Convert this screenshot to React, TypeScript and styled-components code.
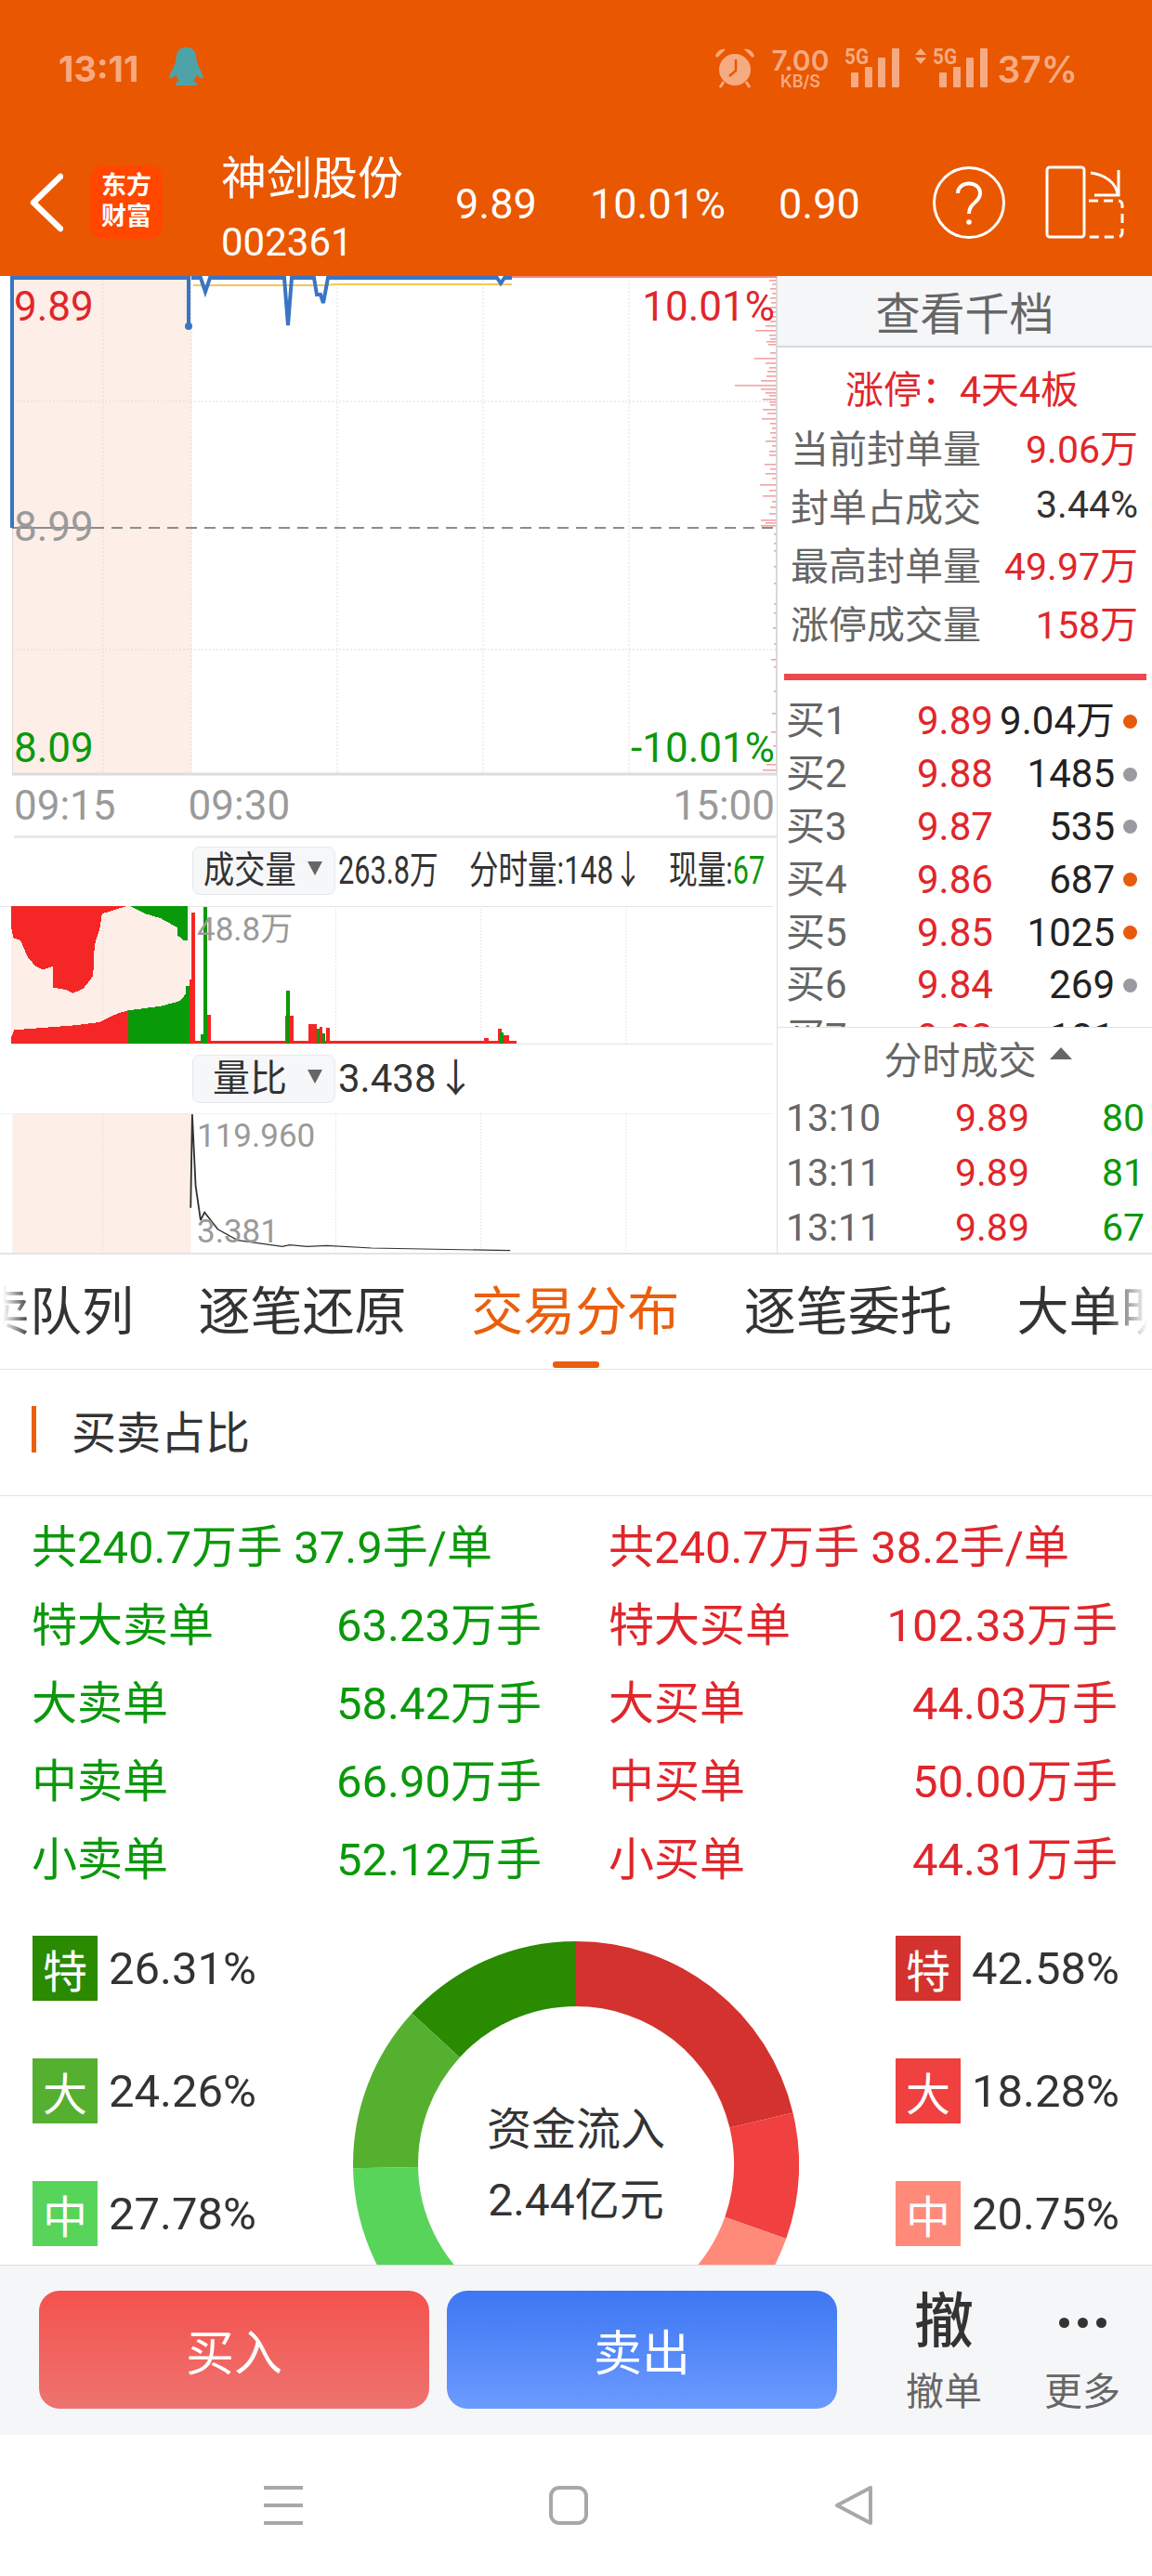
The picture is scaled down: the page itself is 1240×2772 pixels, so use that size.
import styled, { createGlobalStyle } from 'styled-components';

const RED = '#e0262b';
const GREEN = '#0b980b';
const ORANGE = '#e95700';
const STATUS = '#f6aa82';

const GlobalStyle = createGlobalStyle`
  html, body {
    margin: 0;
    padding: 0;
    background: #fff;
  }
  * {
    box-sizing: border-box;
  }
`;

const Page = styled.div`
  width: 1240px;
  height: 2772px;
  display: flex;
  flex-direction: column;
  overflow: hidden;
  background: #fff;
  color: #222;
  font-family: Roboto, 'Noto Sans CJK SC', sans-serif;
`;

const Top = styled.div`
  height: 297px;
  flex: none;
  background: ${ORANGE};
  display: flex;
  flex-direction: column;
`;

const StatusBar = styled.div`
  height: 178px;
  flex: none;
  padding: 51px 80px 0 63px;
  display: flex;
  align-items: flex-start;
  color: ${STATUS};
  font-family: Inter, Roboto, sans-serif;
`;

const Clock = styled.span`
  font-size: 38px;
  font-weight: 700;
  line-height: 46px;
  margin-right: 33px;
`;

const StatusRight = styled.div`
  margin-left: auto;
  display: flex;
  align-items: flex-start;
`;

const Speed = styled.div`
  width: 66px;
  margin: 0 14px 0 16px;
  display: flex;
  flex-direction: column;
  align-items: center;
  font-weight: 600;
  span:first-child {
    font-size: 30px;
    line-height: 28px;
  }
  span:last-child {
    font-size: 18px;
    line-height: 17px;
  }
`;

const SignalIcon = styled.svg<{ $gap: number }>`
  margin-left: ${p => p.$gap}px;
  flex: none;
`;

const Battery = styled.span`
  font-size: 39px;
  font-weight: 600;
  line-height: 48px;
  margin-left: 10px;
`;

const Header = styled.div`
  flex: 1;
  display: flex;
  align-items: flex-start;
  padding-left: 32px;
  color: #fff;
`;

const Logo = styled.div`
  width: 78px;
  height: 79px;
  margin-left: 29px;
  border-radius: 14px;
  background: #ff4700;
  color: #fff;
  font-size: 27px;
  font-weight: 700;
  line-height: 33px;
  text-align: center;
  padding-top: 6px;
`;

const Name = styled.div`
  width: 252px;
  margin-left: 63px;
  margin-top: -18px;
  display: flex;
  flex-direction: column;
  span:first-child {
    font-size: 49px;
    line-height: 66px;
  }
  span:last-child {
    font-size: 42px;
    line-height: 48px;
    margin-top: 11px;
  }
`;

const Quote = styled.span<{ $w: number }>`
  width: ${p => p.$w}px;
  font-size: 45px;
  line-height: 84px;
`;

const Quotes = styled.section`
  height: 1053px;
  flex: none;
  display: flex;
`;

const Charts = styled.div`
  width: 836px;
  flex: none;
  display: flex;
  flex-direction: column;
  border-bottom: 2px solid #e4e4e4;
`;

const ChartBox = styled.div<{ $h: number }>`
  position: relative;
  height: ${p => p.$h}px;
  flex: none;
  svg {
    display: block;
  }
`;

const ChartLabel = styled.span<{ $color: string; $size?: number; $left?: number; $right?: number; $cy: number }>`
  position: absolute;
  ${p => (p.$left !== undefined ? `left: ${p.$left}px;` : '')}
  ${p => (p.$right !== undefined ? `right: ${p.$right}px;` : '')}
  top: ${p => p.$cy - 30}px;
  font-size: ${p => p.$size ?? 44}px;
  line-height: 60px;
  color: ${p => p.$color};
`;

const Axis = styled.div`
  height: 67px;
  flex: none;
  margin-left: 15px;
  padding-right: 2px;
  border-bottom: 3px solid #e8e8e8;
  display: flex;
  align-items: center;
  color: #9a9a9a;
  font-size: 44px;
  line-height: 60px;
  span:nth-child(2) {
    margin-left: 78px;
  }
  span:last-child {
    margin-left: auto;
  }
`;

const IndicatorRow = styled.div<{ $h: number; $pad: number }>`
  height: ${p => p.$h}px;
  flex: none;
  padding: ${p => p.$pad}px 0 0 207px;
  display: flex;
  align-items: flex-start;
  line-height: 52px;
  color: #333;
`;

const Select = styled.div<{ $pad: number }>`
  width: 154px;
  height: 52px;
  padding-left: ${p => p.$pad}px;
  margin-right: 3px;
  border: 1px solid #e6e8ec;
  border-radius: 8px;
  background: #f6f7f9;
  display: flex;
  align-items: center;
  font-size: 40px;
  color: #333;
  flex: none;
  i {
    width: 0;
    height: 0;
    margin-left: auto;
    margin-right: 13px;
    margin-top: -6px;
    border-left: 8px solid transparent;
    border-right: 8px solid transparent;
    border-top: 15px solid #666;
  }
`;

const Squeezed = styled.span<{ $w: number; $scale: number; $size: number }>`
  display: inline-block;
  flex: none;
  width: ${p => p.$w}px;
  font-size: ${p => p.$size}px;
  white-space: nowrap;
  transform: scaleX(${p => p.$scale});
  transform-origin: left center;
  em {
    font-style: normal;
    color: ${GREEN};
  }
`;

const RatioValue = styled.span`
  font-size: 42px;
  white-space: nowrap;
`;

const Side = styled.div`
  flex: 1;
  min-width: 0;
  height: 1053px;
  overflow: hidden;
  border-left: 1px solid #dedede;
  border-bottom: 2px solid #e4e4e4;
  display: flex;
  flex-direction: column;
`;

const SideTitle = styled.div`
  height: 77px;
  flex: none;
  background: #f5f6f8;
  border-bottom: 2px solid #d9dadc;
  display: flex;
  align-items: center;
  justify-content: center;
  font-size: 48px;
  color: #666;
  padding-bottom: 2px;
`;

const LimitTitle = styled.div`
  height: 74px;
  flex: none;
  padding-top: 10px;
  padding-left: 73px;
  display: flex;
  align-items: center;
  font-size: 41px;
  color: ${RED};
`;

const LimitRows = styled.div`
  padding: 0 15px 0 14px;
  display: flex;
  flex-direction: column;
`;

const LimitRow = styled.div`
  height: 63px;
  display: flex;
  align-items: center;
  justify-content: space-between;
  font-size: 41px;
  color: #666;
`;

const LimitValue = styled.span<{ $red?: boolean }>`
  font-size: 41px;
  color: ${p => (p.$red ? RED : '#333')};
`;

const RedRule = styled.div`
  height: 7px;
  flex: none;
  margin: 25px 6px 16px 7px;
  background: #e84a4f;
`;

const Book = styled.div`
  height: 357px;
  flex: none;
  overflow: hidden;
  padding-left: 9px;
`;

const BookRow = styled.div`
  height: 56.8px;
  display: flex;
  align-items: center;
  font-size: 42px;
  line-height: 56px;
`;

const BookLabel = styled.span`
  width: 141px;
  flex: none;
  color: #666;
`;

const BookPrice = styled.span`
  width: 84px;
  flex: none;
  color: ${RED};
`;

const BookQty = styled.span`
  width: 129px;
  flex: none;
  text-align: right;
  color: #222;
  white-space: nowrap;
`;

const Dot = styled.i<{ $on: boolean }>`
  width: 15px;
  height: 15px;
  margin-left: 9px;
  flex: none;
  border-radius: 50%;
  background: ${p => (p.$on ? '#e85a0c' : '#9a9aa2')};
`;

const TradesTitle = styled.div`
  height: 68px;
  flex: none;
  border-top: 1px solid #e2e2e2;
  display: flex;
  align-items: center;
  justify-content: center;
  gap: 14px;
  font-size: 41px;
  color: #666;
  padding: 0 0 4px 28px;
  i {
    width: 0;
    height: 0;
    margin-bottom: 8px;
    border-left: 12px solid transparent;
    border-right: 12px solid transparent;
    border-bottom: 13px solid #666;
  }
`;

const TradeRow = styled.div`
  height: 59px;
  flex: none;
  padding: 0 8px 0 9px;
  display: flex;
  align-items: center;
  font-size: 41px;
  span:nth-child(1) {
    width: 182px;
    color: #666;
  }
  span:nth-child(2) {
    width: 82px;
    color: ${RED};
  }
  span:nth-child(3) {
    margin-left: auto;
    color: ${GREEN};
  }
`;

const Tabs = styled.nav`
  position: relative;
  height: 124px;
  flex: none;
  overflow: hidden;
  border-bottom: 1px solid #e6e6e6;
  display: flex;
  align-items: center;
`;

const TabList = styled.div`
  margin-left: -80px;
  display: flex;
  gap: 69.6px;
`;

const Tab = styled.span<{ $active?: boolean }>`
  position: relative;
  flex: none;
  width: 224px;
  font-size: 56px;
  line-height: 80px;
  white-space: nowrap;
  color: ${p => (p.$active ? '#eb5e0c' : '#333')};
  ${p =>
    p.$active
      ? `&::after {
    content: '';
    position: absolute;
    left: 88px;
    bottom: -20px;
    width: 50px;
    height: 7px;
    border-radius: 3px;
    background: #eb5e0c;
  }`
      : ''}
`;

const Fade = styled.div<{ $side: 'left' | 'right' }>`
  position: absolute;
  top: 0;
  bottom: 0;
  ${p => p.$side}: 0;
  width: ${p => (p.$side === 'left' ? 32 : 50)}px;
  background: linear-gradient(to ${p => p.$side}, rgba(255, 255, 255, 0), #fff 90%);
`;

const Scroll = styled.main`
  flex: 1;
  min-height: 0;
  overflow: hidden;
`;

const SectionHead = styled.div`
  height: 136px;
  padding: 0 0 8px 34px;
  border-bottom: 1px solid #e2e2e2;
  display: flex;
  align-items: center;
  font-size: 48px;
  color: #333;
  &::before {
    content: '';
    width: 5px;
    height: 50px;
    margin-right: 38px;
    background: #eb5e0c;
  }
`;

const Stats = styled.div`
  padding: 8px 36px 0 34px;
  display: grid;
  grid-template-columns: 549px 548px;
  column-gap: 72px;
`;

const StatRow = styled.div<{ $color: string }>`
  height: 84px;
  display: flex;
  align-items: center;
  justify-content: space-between;
  font-size: 49px;
  color: ${p => p.$color};
  white-space: nowrap;
`;

const Split = styled.div`
  margin-top: 45px;
  padding: 0 35px;
  display: flex;
  justify-content: space-between;
`;

const Legend = styled.div`
  width: 241px;
  flex: none;
  display: flex;
  flex-direction: column;
  gap: 62px;
`;

const LegendRow = styled.div`
  height: 70px;
  display: flex;
  align-items: center;
  gap: 12px;
  font-size: 49px;
  color: #333;
  white-space: nowrap;
`;

const LegendBox = styled.span<{ $bg: string }>`
  width: 70px;
  height: 70px;
  flex: none;
  display: flex;
  align-items: center;
  justify-content: center;
  background: ${p => p.$bg};
  color: #fff;
  font-size: 48px;
`;

const Donut = styled.div`
  position: relative;
  width: 480px;
  height: 480px;
  margin-top: 6px;
  flex: none;
  svg {
    display: block;
  }
`;

const DonutText = styled.div`
  position: absolute;
  inset: 0;
  display: flex;
  flex-direction: column;
  align-items: center;
  justify-content: center;
  font-size: 48px;
  line-height: 76px;
  color: #333;
  padding-top: 2px;
`;

const ActionBar = styled.footer`
  height: 183px;
  flex: none;
  background: #f5f6f8;
  border-top: 1px solid #dcdcdc;
  padding: 27px 0 0 42px;
  display: flex;
  align-items: flex-start;
`;

const TradeButton = styled.button<{ $from: string; $to: string }>`
  width: 420px;
  height: 127px;
  margin-right: 19px;
  border: 0;
  border-radius: 22px;
  background: linear-gradient(${p => p.$from}, ${p => p.$to});
  color: #fff;
  font-family: inherit;
  font-size: 52px;
`;

const ActionItem = styled.div<{ $w: number; $ml: number }>`
  width: ${p => p.$w}px;
  margin-left: ${p => p.$ml}px;
  flex: none;
  display: flex;
  flex-direction: column;
  align-items: center;
  font-size: 41px;
  line-height: 56px;
  color: #666;
`;

const ActionGlyph = styled.div`
  height: 68px;
  display: flex;
  align-items: center;
  justify-content: center;
  font-size: 64px;
  font-weight: 500;
  color: #333;
  margin-bottom: 13px;
  gap: 9px;
`;

const MoreDot = styled.i`
  width: 11px;
  height: 11px;
  border-radius: 50%;
  background: #333;
`;

const NavBar = styled.div`
  height: 152px;
  flex: none;
  padding: 55px 0 0 284px;
  display: flex;
  align-items: flex-start;
  gap: 265px;
  background: #fff;
`;

const BOOK = [
  ['买1', '9.89', '9.04万', true],
  ['买2', '9.88', '1485', false],
  ['买3', '9.87', '535', false],
  ['买4', '9.86', '687', true],
  ['买5', '9.85', '1025', true],
  ['买6', '9.84', '269', false],
  ['买7', '9.83', '181', false],
] as const;

const STATS: [string, string, string, string][] = [
  ['特大卖单', '63.23万手', '特大买单', '102.33万手'],
  ['大卖单', '58.42万手', '大买单', '44.03万手'],
  ['中卖单', '66.90万手', '中买单', '50.00万手'],
  ['小卖单', '52.12万手', '小买单', '44.31万手'],
];

const polar = (r: number, deg: number) => {
  const a = ((deg - 90) * Math.PI) / 180;
  return [240 + r * Math.cos(a), 240 + r * Math.sin(a)];
};

const arc = (from: number, to: number) => {
  const [lo, hi] = from < to ? [from, to] : [to, from];
  const [x1, y1] = polar(240, lo);
  const [x2, y2] = polar(240, hi);
  const [x3, y3] = polar(170, hi);
  const [x4, y4] = polar(170, lo);
  return `M${x1} ${y1}A240 240 0 0 1 ${x2} ${y2}L${x3} ${y3}A170 170 0 0 0 ${x4} ${y4}Z`;
};

const RING: [number, number, string][] = [
  [0, 76.6, '#d3322f'],
  [76.6, 109.5, '#f04040'],
  [109.5, 146.9, '#ff8a7a'],
  [146.9, 180, '#ffb9a8'],
  [0, -47.4, '#2a8a00'],
  [-47.4, -91, '#55b030'],
  [-91, -141, '#58d45a'],
  [-141, -180, '#a0e49c'],
];

// order-book depth ticks down the right edge of the price chart: [y, width]
const DEPTH: [number, number][] = [
  [4, 7], [8, 4], [13, 6], [18, 4], [23, 6], [28, 5], [33, 6], [38, 4], [43, 6], [48, 6],
  [53, 11], [58, 22], [63, 7], [67, 6], [70, 10], [73, 8], [82, 6], [88, 23], [93, 11], [98, 7],
  [102, 9], [107, 10], [112, 16], [117, 44], [121, 16], [125, 11], [128, 7], [132, 14], [135, 7], [138, 6],
  [143, 14], [147, 9], [153, 15], [158, 6], [163, 4], [168, 6], [173, 4], [177, 11], [182, 4], [188, 7],
  [192, 7], [202, 12], [207, 6], [212, 11], [217, 4], [224, 17], [230, 7], [236, 14], [242, 4], [248, 6],
  [255, 7], [262, 16], [265, 11], [268, 16], [277, 2], [287, 2], [295, 2], [312, 2], [330, 2], [352, 2],
  [362, 2], [378, 3], [395, 2], [412, 5], [420, 2], [446, 2], [470, 4], [490, 5], [505, 3], [525, 10], [531, 14],
];

const MainChart = () => (
  <svg width={836} height={538} viewBox="0 0 836 538">
    <rect x={13} y={0} width={193} height={536} fill="#fdeee7" />
    {[111, 206, 363, 520, 677].map(x => (
      <line key={x} x1={x} x2={x} y1={0} y2={536} stroke="#dedede" strokeDasharray="2 2" />
    ))}
    {[135, 402].map(y => (
      <line key={y} x1={13} x2={835} y1={y} y2={y} stroke="#dedede" strokeDasharray="2 2" />
    ))}
    <line x1={13.5} x2={13.5} y1={0} y2={536} stroke="#dcdcdc" />
    <line x1={835.5} x2={835.5} y1={0} y2={536} stroke="#d4d4d4" />
    <line x1={13} x2={836} y1={536} y2={536} stroke="#dcdcdc" strokeWidth={3} />
    <line x1={100} x2={835} y1={271} y2={271} stroke="#8c8c8c" strokeWidth={2} strokeDasharray="12 8" />
    <line x1={13} x2={100} y1={271} y2={271} stroke="#8c8c8c" strokeWidth={2} />
    {DEPTH.map(([y, w]) => (
      <rect key={y} x={835 - w} y={y} width={w} height={1.6} fill="#f2a3a3" />
    ))}
    <rect x={551} y={0} width={285} height={2} fill="#f0887c" />
    <path d="M208 10H350L360 9H551" fill="none" stroke="#f3c75a" strokeWidth={2} />
    <path
      d="M13 271V2H203V53M206 2H216L221 17L226 2H306L310 53L314 2H338L341 20L345 20L348 29L353 2H535L539 8L543 2H551"
      fill="none"
      stroke="#3a75c4"
      strokeWidth={4}
    />
    <circle cx={203} cy={54} r={4} fill="#3a75c4" />
  </svg>
);

const RED_BARS = [
  [382, 237, 5], [387, 22, 7], [417, 352, 8], [575, 355, 17], [623, 380, 17], [645, 390, 5],
  [658, 393, 8], [978, 427, 9], [1005, 395, 7], [1016, 417, 12], [1028, 435, 14],
];
const GREEN_BARS = [
  [405, 415, 6], [411, 3, 8], [578, 274, 8], [640, 395, 6], [650, 412, 6], [1010, 408, 6],
];

const VolumeChart = () => (
  <svg width={836} height={149} viewBox="0 0 1568 447" preserveAspectRatio="none" shapeRendering="crispEdges">
    <rect x={22} y={0} width={363} height={447} fill="#fdeee7" />
    {[208, 678, 971, 1264].map(x => (
      <line key={x} x1={x} x2={x} y1={0} y2={447} stroke="#dedede" strokeWidth={2} strokeDasharray="4 6" />
    ))}
    <line x1={0} x2={1560} y1={0} y2={0} stroke="#e4e4e4" strokeWidth={3} />
    <line x1={22} x2={1560} y1={446} y2={446} stroke="#e4e4e4" strokeWidth={5} />
    <polygon
      fill="#f42626"
      points="22,0 256,0 206,25 201,75 191,125 188,225 169,265 147,282 134,270 107,263 107,195 87,205 72,195 56,165 41,110 27,103 22,65"
    />
    <polygon fill="#099a09" points="262,0 378,0 378,110 370,110 359,95 359,70 325,40 294,25" />
    <polygon fill="#f42626" points="22,445 22,425 29,400 150,385 200,375 237,347 258,337 258,445" />
    <polygon fill="#099a09" points="258,337 325,323 362,307 375,285 376,257 382,257 382,445 258,445" />
    <rect x={382} y={435} width={660} height={10} fill="#f42626" />
    {RED_BARS.map(([x, y, w]) => (
      <rect key={x} x={x} y={y} width={w} height={445 - y} fill="#f42626" />
    ))}
    {GREEN_BARS.map(([x, y, w]) => (
      <rect key={x} x={x} y={y} width={w} height={445 - y} fill="#099a09" />
    ))}
  </svg>
);

const RatioChart = () => (
  <svg width={836} height={151} viewBox="0 0 1568 453" preserveAspectRatio="none">
    <rect x={25} y={0} width={360} height={450} fill="#fdeee7" />
    {[208, 678, 971, 1264].map(x => (
      <line key={x} x1={x} x2={x} y1={0} y2={450} stroke="#dedede" strokeWidth={2} strokeDasharray="4 6" />
    ))}
    <line x1={0} x2={1560} y1={0} y2={0} stroke="#e4e4e4" strokeWidth={3} />
    <polyline
      fill="none"
      stroke="#333"
      strokeWidth={3.5}
      points="385,305 388,3 395,235 405,345 413,320 440,375 480,410 570,430 585,425 620,430 660,427 750,435 1030,443"
    />
  </svg>
);

const Alarm = () => (
  <svg width={44} height={44} viewBox="0 0 44 44" fill="none">
    <circle cx={22} cy={24} r={17} fill={STATUS} />
    <path d="M23 13V25L16 31" stroke={ORANGE} strokeWidth={2.5} />
    <path d="M1 9C3 4 7 1 12 2L3 11ZM43 9C41 4 37 1 32 2L41 11Z" fill={STATUS} />
    <path d="M10 37L6 43M34 37L38 43" stroke={STATUS} strokeWidth={3} />
  </svg>
);

const Signal = ({ arrows }: { arrows?: boolean }) => (
  <SignalIcon
    $gap={arrows ? 16 : 0}
    width={arrows ? 79 : 60}
    height={44}
    viewBox={arrows ? '0 0 79 44' : '0 0 60 44'}
  >
    {arrows && <path d="M0 8L6 1L12 8ZM0 11L6 18L12 11Z" fill={STATUS} />}
    <g transform={arrows ? 'translate(26 0)' : 'translate(7 0)'}>
      <rect x={0} y={27} width={8} height={16} rx={1} fill={STATUS} />
      <rect x={15} y={21} width={8} height={22} rx={1} fill={STATUS} />
      <rect x={29} y={11} width={8} height={32} rx={1} fill={STATUS} />
      <rect x={44} y={1} width={8} height={42} rx={1} fill={STATUS} />
      <text
        x={-7}
        y={18}
        fontSize={23}
        fontWeight={700}
        fill={STATUS}
        textLength={26}
        lengthAdjust="spacingAndGlyphs"
        fontFamily="Roboto, sans-serif"
      >
        5G
      </text>
    </g>
  </SignalIcon>
);

const Penguin = () => (
  <svg width={37} height={42} viewBox="0 0 37 42">
    <path
      d="M18.5 0C10 0 7.500 6 7.500 13C7 19 2 25 0.500 31C0 34 2 34 5 32L7.500 29C8 32 9 34 11 36C8 37 6 39 7 41H30C31 39 29 37 26 36C28 34 29 32 29.500 29L32 32C35 34 37 34 36.500 31C35 25 30 19 29.500 13C29.500 6 27 0 18.500 0Z"
      fill="#4fa3a8"
    />
  </svg>
);

const Back = () => (
  <svg
    width={36}
    height={64}
    viewBox="0 0 36 64"
    fill="none"
    stroke="#fff"
    strokeWidth={6.5}
    strokeLinecap="round"
    strokeLinejoin="round"
    style={{ marginTop: 8 }}
  >
    <path d="M33 4L4 32L33 60" />
  </svg>
);

const Help = () => (
  <svg width={80} height={80} viewBox="0 0 80 80" fill="none" stroke="#fff">
    <circle cx={40} cy={40} r={37.5} strokeWidth={3} />
    <path d="M28 30C28 16 52 16 52 30C52 40 40 40 40 52" strokeWidth={4} />
    <circle cx={40} cy={61} r={2.8} fill="#fff" stroke="none" />
  </svg>
);

const Flip = () => (
  <svg width={86} height={80} viewBox="0 0 86 80" fill="none" stroke="#fff" strokeWidth={3} style={{ marginLeft: 42 }}>
    <rect x={2} y={2} width={40} height={75} rx={3} />
    <path d="M49 8C64 10 76 18 78 31M79 5V32H53" />
    <path d="M47 38H78Q83 38 83 43V72Q83 77 78 77H47" strokeDasharray="10 6" />
  </svg>
);

const Menu = () => (
  <svg width={42} height={42} viewBox="0 0 42 42" fill="#a8a8a8">
    <rect y={0} width={42} height={4} />
    <rect y={19} width={42} height={4} />
    <rect y={38} width={42} height={4} />
  </svg>
);

const Home = () => (
  <svg width={42} height={42} viewBox="0 0 42 42" fill="none" stroke="#a8a8a8" strokeWidth={4}>
    <rect x={2} y={2} width={38} height={38} rx={9} />
  </svg>
);

const Return = () => (
  <svg width={42} height={42} viewBox="0 0 42 42" fill="none" stroke="#a8a8a8" strokeWidth={4} strokeLinejoin="round">
    <path d="M39 2V40L3 21Z" />
  </svg>
);

const App = () => (
  <Page>
    <GlobalStyle />
    <Top>
      <StatusBar>
        <Clock>13:11</Clock>
        <Penguin />
        <StatusRight>
          <Alarm />
          <Speed>
            <span>7.00</span>
            <span>KB/S</span>
          </Speed>
          <Signal />
          <Signal arrows />
          <Battery>37%</Battery>
        </StatusRight>
      </StatusBar>
      <Header>
        <Back />
        <Logo>
          东方
          <br />
          财富
        </Logo>
        <Name>
          <span>神剑股份</span>
          <span>002361</span>
        </Name>
        <Quote $w={145}>9.89</Quote>
        <Quote $w={203}>10.01%</Quote>
        <Quote $w={165}>0.90</Quote>
        <Help />
        <Flip />
      </Header>
    </Top>

    <Quotes>
      <Charts>
        <ChartBox $h={538}>
          <MainChart />
          <ChartLabel $color={RED} $left={15} $cy={33}>
            9.89
          </ChartLabel>
          <ChartLabel $color={RED} $right={2} $cy={33}>
            10.01%
          </ChartLabel>
          <ChartLabel $color="#9a9a9a" $left={15} $cy={270}>
            8.99
          </ChartLabel>
          <ChartLabel $color={GREEN} $left={15} $cy={508}>
            8.09
          </ChartLabel>
          <ChartLabel $color={GREEN} $right={2} $cy={508}>
            -10.01%
          </ChartLabel>
        </ChartBox>
        <Axis>
          <span>09:15</span>
          <span>09:30</span>
          <span>15:00</span>
        </Axis>
        <IndicatorRow $h={73} $pad={9}>
          <Select $pad={11}>
            <Squeezed $w={104} $scale={0.83} $size={40}>
              成交量
            </Squeezed>
            <i />
          </Select>
          <Squeezed $w={141} $scale={0.73} $size={42}>
            263.8万
          </Squeezed>
          <Squeezed $w={215} $scale={0.75} $size={42}>
            分时量:148↓
          </Squeezed>
          <Squeezed $w={110} $scale={0.73} $size={42}>
            现量:<em>67</em>
          </Squeezed>
        </IndicatorRow>
        <ChartBox $h={149}>
          <VolumeChart />
          <ChartLabel $color="#9a9a9a" $size={35} $left={212} $cy={26}>
            48.8万
          </ChartLabel>
        </ChartBox>
        <IndicatorRow $h={74} $pad={11}>
          <Select $pad={21}>
            量比
            <i />
          </Select>
          <RatioValue>3.438↓</RatioValue>
        </IndicatorRow>
        <ChartBox $h={149}>
          <RatioChart />
          <ChartLabel $color="#9a9a9a" $size={35} $left={212} $cy={25}>
            119.960
          </ChartLabel>
          <ChartLabel $color="#9a9a9a" $size={35} $left={212} $cy={128}>
            3.381
          </ChartLabel>
        </ChartBox>
      </Charts>

      <Side>
        <SideTitle>查看千档</SideTitle>
        <LimitTitle>涨停：4天4板</LimitTitle>
        <LimitRows>
          <LimitRow>
            当前封单量<LimitValue $red>9.06万</LimitValue>
          </LimitRow>
          <LimitRow>
            封单占成交<LimitValue>3.44%</LimitValue>
          </LimitRow>
          <LimitRow>
            最高封单量<LimitValue $red>49.97万</LimitValue>
          </LimitRow>
          <LimitRow>
            涨停成交量<LimitValue $red>158万</LimitValue>
          </LimitRow>
        </LimitRows>
        <RedRule />
        <Book>
          {BOOK.map(([label, price, qty, on]) => (
            <BookRow key={label}>
              <BookLabel>{label}</BookLabel>
              <BookPrice>{price}</BookPrice>
              <BookQty>{qty}</BookQty>
              <Dot $on={on} />
            </BookRow>
          ))}
        </Book>
        <TradesTitle>
          分时成交
          <i />
        </TradesTitle>
        <TradeRow>
          <span>13:10</span>
          <span>9.89</span>
          <span>80</span>
        </TradeRow>
        <TradeRow>
          <span>13:11</span>
          <span>9.89</span>
          <span>81</span>
        </TradeRow>
        <TradeRow>
          <span>13:11</span>
          <span>9.89</span>
          <span>67</span>
        </TradeRow>
      </Side>
    </Quotes>

    <Tabs>
      <TabList>
        <Tab>买卖队列</Tab>
        <Tab>逐笔还原</Tab>
        <Tab $active>交易分布</Tab>
        <Tab>逐笔委托</Tab>
        <Tab>大单明细</Tab>
      </TabList>
      <Fade $side="left" />
      <Fade $side="right" />
    </Tabs>

    <Scroll>
      <SectionHead>买卖占比</SectionHead>
      <Stats>
        <StatRow $color={GREEN}>共240.7万手 37.9手/单</StatRow>
        <StatRow $color={RED}>共240.7万手 38.2手/单</StatRow>
        {STATS.map(([sell, sellVal, buy, buyVal]) => [
          <StatRow key={sell} $color={GREEN}>
            <span>{sell}</span>
            <span>{sellVal}</span>
          </StatRow>,
          <StatRow key={buy} $color={RED}>
            <span>{buy}</span>
            <span>{buyVal}</span>
          </StatRow>,
        ])}
      </Stats>
      <Split>
        <Legend>
          <LegendRow>
            <LegendBox $bg="#2a8a00">特</LegendBox>26.31%
          </LegendRow>
          <LegendRow>
            <LegendBox $bg="#55b030">大</LegendBox>24.26%
          </LegendRow>
          <LegendRow>
            <LegendBox $bg="#58d45a">中</LegendBox>27.78%
          </LegendRow>
        </Legend>
        <Donut>
          <svg width={480} height={480} viewBox="0 0 480 480">
            {RING.map(([from, to, color]) => (
              <path key={color} d={arc(from, to)} fill={color} />
            ))}
          </svg>
          <DonutText>
            <span>资金流入</span>
            <span>2.44亿元</span>
          </DonutText>
        </Donut>
        <Legend>
          <LegendRow>
            <LegendBox $bg="#d3322f">特</LegendBox>42.58%
          </LegendRow>
          <LegendRow>
            <LegendBox $bg="#f04040">大</LegendBox>18.28%
          </LegendRow>
          <LegendRow>
            <LegendBox $bg="#ff8a7a">中</LegendBox>20.75%
          </LegendRow>
        </Legend>
      </Split>
    </Scroll>

    <ActionBar>
      <TradeButton $from="#f4524d" $to="#ee7370">
        买入
      </TradeButton>
      <TradeButton $from="#3d77f2" $to="#6c9aff">
        卖出
      </TradeButton>
      <ActionItem $w={140} $ml={26}>
        <ActionGlyph>撤</ActionGlyph>
        撤单
      </ActionItem>
      <ActionItem $w={118} $ml={20}>
        <ActionGlyph>
          <MoreDot />
          <MoreDot />
          <MoreDot />
        </ActionGlyph>
        更多
      </ActionItem>
    </ActionBar>
    <NavBar>
      <Menu />
      <Home />
      <Return />
    </NavBar>
  </Page>
);

export default App;
